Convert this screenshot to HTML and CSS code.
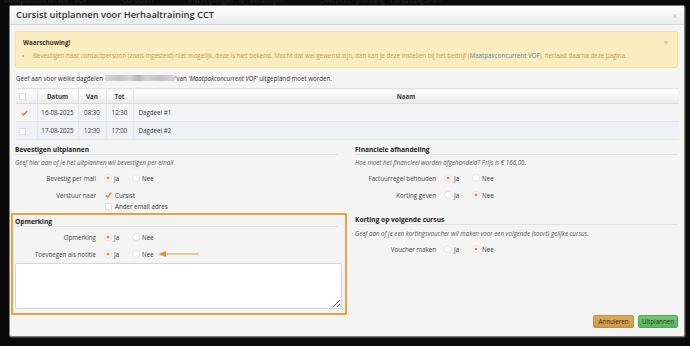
FILE: index.html
```html
<!DOCTYPE html>
<html lang="nl">
<head>
<meta charset="utf-8">
<title>Cursist uitplannen</title>
<link rel="stylesheet" href="styles.css">
</head>
<body>
<div class="backdrop"><span>Maatpakconcurrent VOF &nbsp;&nbsp;&nbsp;&nbsp; Cursisten &nbsp;&nbsp;&nbsp;&nbsp; Inschrijvingen &amp; Betalingen &nbsp;&nbsp;&nbsp;&nbsp; Overzicht planning cursusdagdelen</span></div>
<div class="modal">
  <div class="modal-header">
    <h3 class="title">Cursist uitplannen voor Herhaaltraining CCT</h3>
    <span class="close">x</span>
  </div>
  <div class="modal-body">
    <div class="alert">
      <div class="alert-content">
        <div class="alert-title">Waarschuwing!</div>
        <ul class="alert-list">
          <li>Bevestigen naar contactpersoon (zoals ingesteld) niet mogelijk, deze is niet bekend. Mocht dat wel gewenst zijn, dan kan je deze instellen bij het bedrijf (<span class="link">Maatpakconcurrent VOF</span>), herlaad daarna deze pagina.</li>
        </ul>
      </div>
      <span class="alert-close">×</span>
    </div>
    <p class="intro">Geef aan voor welke dagdelen <span class="redact"></span>'van <em>'Maatpakconcurrent VOF'</em> uitgepland moet worden.</p>
    <table class="grid">
      <colgroup><col class="c-chk"><col class="c-date"><col class="c-van"><col class="c-tot"><col></colgroup>
      <thead>
        <tr><th class="chk"><span class="box"></span></th><th>Datum</th><th>Van</th><th>Tot</th><th>Naam</th></tr>
      </thead>
      <tbody>
        <tr><td class="chk"><svg class="tick" width="7" height="6" viewBox="0 0 7 6"><path d="M0.8 3.2 L2.7 5 L6.3 0.8" fill="none" stroke="#ef7b27" stroke-width="1.4"/></svg></td><td class="center">16-08-2025</td><td class="center">08:30</td><td class="center">12:30</td><td class="name">Dagdeel #1</td></tr>
        <tr class="alt"><td class="chk"><span class="box"></span></td><td class="center">17-08-2025</td><td class="center">12:30</td><td class="center">17:00</td><td class="name">Dagdeel #2</td></tr>
      </tbody>
    </table>
    <div class="cols">
      <div class="col">
        <div class="section">
          <h4>Bevestigen uitplannen</h4>
          <p class="hint">Geef hier aan of je het uitplannen wil bevestigen per email</p>
          <div class="field">
            <span class="label">Bevestig per mail</span>
            <div class="controls"><span class="opt"><span class="radio on"></span>Ja</span><span class="opt"><span class="radio"></span>Nee</span></div>
          </div>
          <div class="field">
            <span class="label">Verstuur naar</span>
            <div class="controls stack">
              <span class="opt"><svg class="tick cb" width="7" height="6" viewBox="0 0 7 6"><path d="M0.8 3.2 L2.7 5 L6.3 0.8" fill="none" stroke="#ef7b27" stroke-width="1.4"/></svg>Cursist</span>
              <span class="opt"><span class="box cb"></span>Ander email adres</span>
            </div>
          </div>
        </div>
        <div class="highlight">
          <h4>Opmerking</h4>
          <div class="field">
            <span class="label">Opmerking</span>
            <div class="controls"><span class="opt"><span class="radio on"></span>Ja</span><span class="opt"><span class="radio"></span>Nee</span></div>
          </div>
          <div class="field last">
            <span class="label">Toevoegen als notitie</span>
            <div class="controls"><span class="opt"><span class="radio on"></span>Ja</span><span class="opt"><span class="radio"></span>Nee</span><svg class="arrow" width="42" height="8" viewBox="0 0 42 8"><path d="M7 4 H41" stroke="#dc9a2c" stroke-width="1.2"/><path d="M0 4 L8 1 L8 7 Z" fill="#dc9a2c"/></svg></div>
          </div>
          <textarea class="note"></textarea>
        </div>
      </div>
      <div class="col">
        <div class="section">
          <h4>Financiele afhandeling</h4>
          <p class="hint">Hoe moet het financieel worden afgehandeld? Prijs is € 166,00.</p>
          <div class="field">
            <span class="label">Factuurregel behouden</span>
            <div class="controls"><span class="opt"><span class="radio on"></span>Ja</span><span class="opt"><span class="radio"></span>Nee</span></div>
          </div>
          <div class="field">
            <span class="label">Korting geven</span>
            <div class="controls"><span class="opt"><span class="radio"></span>Ja</span><span class="opt"><span class="radio on"></span>Nee</span></div>
          </div>
        </div>
        <div class="section">
          <h4 class="spaced">Korting op volgende cursus</h4>
          <p class="hint">Geef aan of je een kortingsvoucher wil maken voor een volgende (soort) gelijke cursus.</p>
          <div class="field">
            <span class="label">Voucher maken</span>
            <div class="controls"><span class="opt"><span class="radio"></span>Ja</span><span class="opt"><span class="radio on"></span>Nee</span></div>
          </div>
        </div>
      </div>
    </div>
  </div>
  <div class="modal-footer">
    <button class="btn btn-cancel">Annuleren</button>
    <button class="btn btn-ok">Uitplannen</button>
  </div>
</div>
</body>
</html>
```
FILE: styles.css
```css
* { box-sizing: border-box; }
html, body { margin: 0; padding: 0; }
body {
  background: #0a0a0a;
  width: 690px;
  height: 346px;
  overflow: hidden;
  font-family: "Open Sans", "DejaVu Sans", sans-serif;
  font-size: 6.2px;
  color: #333;
}
.backdrop {
  height: 5px;
  overflow: hidden;
  color: #2a2a2a;
  font-size: 7px;
  line-height: 7px;
  padding-left: 4px;
  white-space: nowrap;
}
.backdrop span { display: block; margin-top: -3px; word-spacing: 4px; }

.modal {
  margin-left: 9px;
  width: 676px;
  height: 332px;
  background: #f4f4f4;
  border: 1px solid #7a7a7a;
  border-radius: 2px;
  box-shadow: 1px 1px 0 #3a3a3a;
  display: flex;
  flex-direction: column;
  overflow: hidden;
}
.modal-header {
  height: 19px;
  flex: none;
  display: flex;
  align-items: center;
  justify-content: space-between;
  padding: 0 7px 0 6px;
  background: linear-gradient(#ffffff, #ececec);
  border-bottom: 1px solid #d8d8d8;
}
.title {
  margin: 0;
  font-size: 9.3px;
  font-weight: 600;
  color: #333;
  line-height: 12px;
}
.close { color: #b0b0b0; font-size: 7px; }

.modal-body { padding: 6px 6px 0 5px; flex: none; }

.alert {
  display: flex;
  align-items: flex-start;
  background: #fbedbf;
  border: 1px solid #f2df9e;
  border-radius: 2px;
  padding: 5.5px 9px 7.5px 7px;
  color: #c39a4e;
  line-height: 9px;
}
.alert-content { flex: 1; }
.alert-title { font-weight: 700; color: #3b3422; }
.alert-list { margin: 4px 0 0; padding-left: 10px; }
.link { color: #5c7fa6; }
.alert-close { color: #b3a68a; font-size: 7.5px; line-height: 9px; }

.intro { margin: 5.5px 0 5.5px 1px; line-height: 9px; }
.intro em { font-style: italic; }
.redact {
  display: inline-block;
  width: 70px;
  height: 6px;
  vertical-align: -0.5px;
  background: linear-gradient(90deg, #d8d8d8, #c4c4c4 20%, #d4d4d4 35%, #b6b6b6 48%, #d2d2d2 58%, #c2c2c2 78%, #d6d6d6);
  filter: blur(0.7px);
  margin-right: 0.5px;
}

.grid {
  width: 100%;
  border-collapse: collapse;
  border-top: 1px solid #e2e2e2;
  margin-left: 0.5px;
}
.c-chk { width: 21.5px; }
.c-date { width: 41px; }
.c-van { width: 28px; }
.c-tot { width: 27px; }
.grid th {
  height: 15px;
  padding: 0;
  font-weight: 700;
  text-align: center;
  background: linear-gradient(#ffffff, #ebebeb);
  border-left: 1px solid #e1e1e1;
  border-bottom: 1px solid #d9d9d9;
  color: #3a3a3a;
}
.grid th:first-child, .grid td:first-child { border-left: none; }
.grid td {
  height: 18px;
  padding: 0;
  border-left: 1px solid #e6e6e6;
  border-bottom: 1px solid #e8e8e8;
}
.grid .chk { text-align: left; padding-left: 3.5px; }
.grid tbody .chk { padding-left: 5px; }
.grid td.center { text-align: center; }
.grid td.name { padding-left: 5px; }
.grid tr.alt td { background: #f0f1f6; }
.box {
  display: inline-block;
  width: 7px;
  height: 7px;
  background: #fff;
  border: 1px solid #dedede;
  vertical-align: middle;
}
.grid tbody .box { margin-left: -1.5px; }
.tick { display: inline-block; vertical-align: middle; }

.cols {
  display: grid;
  grid-template-columns: 1fr 1fr;
  column-gap: 17px;
  margin-top: 4.5px;
}
.section { padding-bottom: 8px; }
h4 {
  margin: 0 0 3px;
  font-size: 6.6px;
  font-weight: 700;
  line-height: 9px;
  color: #222;
  border-bottom: 1px solid #e2e2e2;
}
h4.spaced { margin-bottom: 4px; }
.hint { margin: 0 0 6px; line-height: 9px; font-style: italic; color: #555; }
.field {
  display: grid;
  grid-template-columns: 81px 1fr;
  column-gap: 8px;
  margin-bottom: 6px;
  line-height: 11px;
}
.field.last { margin-bottom: 3.5px; }
.label { text-align: right; color: #444; }
.controls { display: flex; align-items: center; }
.controls.stack { flex-direction: column; align-items: flex-start; }
.opt { display: inline-flex; align-items: center; margin-right: 13px; }
.radio {
  width: 8px;
  height: 8px;
  border-radius: 50%;
  background: #fff;
  border: 1px solid #e3e3e3;
  margin-right: 2px;
}
.radio.on { background: radial-gradient(circle, #f07d28 0 1.2px, #ffffff 1.7px); }
.cb { margin: 0 3px 0 1px; }
.arrow { margin-left: -9px; }

.highlight {
  margin: -12.5px -8.5px 0 -4px;
  border: 2px solid #e3a53c;
  padding: 1.5px 6.5px 4px 2px;
}
.highlight h4 { margin-bottom: 5px; }
.note {
  display: block;
  width: calc(100% + 4px);
  height: 45.5px;
  background: #fff;
  border: 1px solid #d6d6d6;
  border-radius: 2px;
  margin: 0;
  font: inherit;
}

.modal-footer {
  margin-top: auto;
  display: flex;
  justify-content: flex-end;
  gap: 4px;
  padding: 0 6px 8px 0;
}
.btn {
  height: 13px;
  padding: 0;
  font-family: inherit;
  font-size: 6.2px;
  border-radius: 2px;
  color: #3a3020;
}
.btn-cancel {
  width: 41px;
  background: linear-gradient(#dcab5b, #cf9a46);
  border: 1px solid #bf8f44;
}
.btn-ok {
  width: 40px;
  background: linear-gradient(#74c574, #5db45d);
  border: 1px solid #55a555;
  color: #213a21;
}
```
